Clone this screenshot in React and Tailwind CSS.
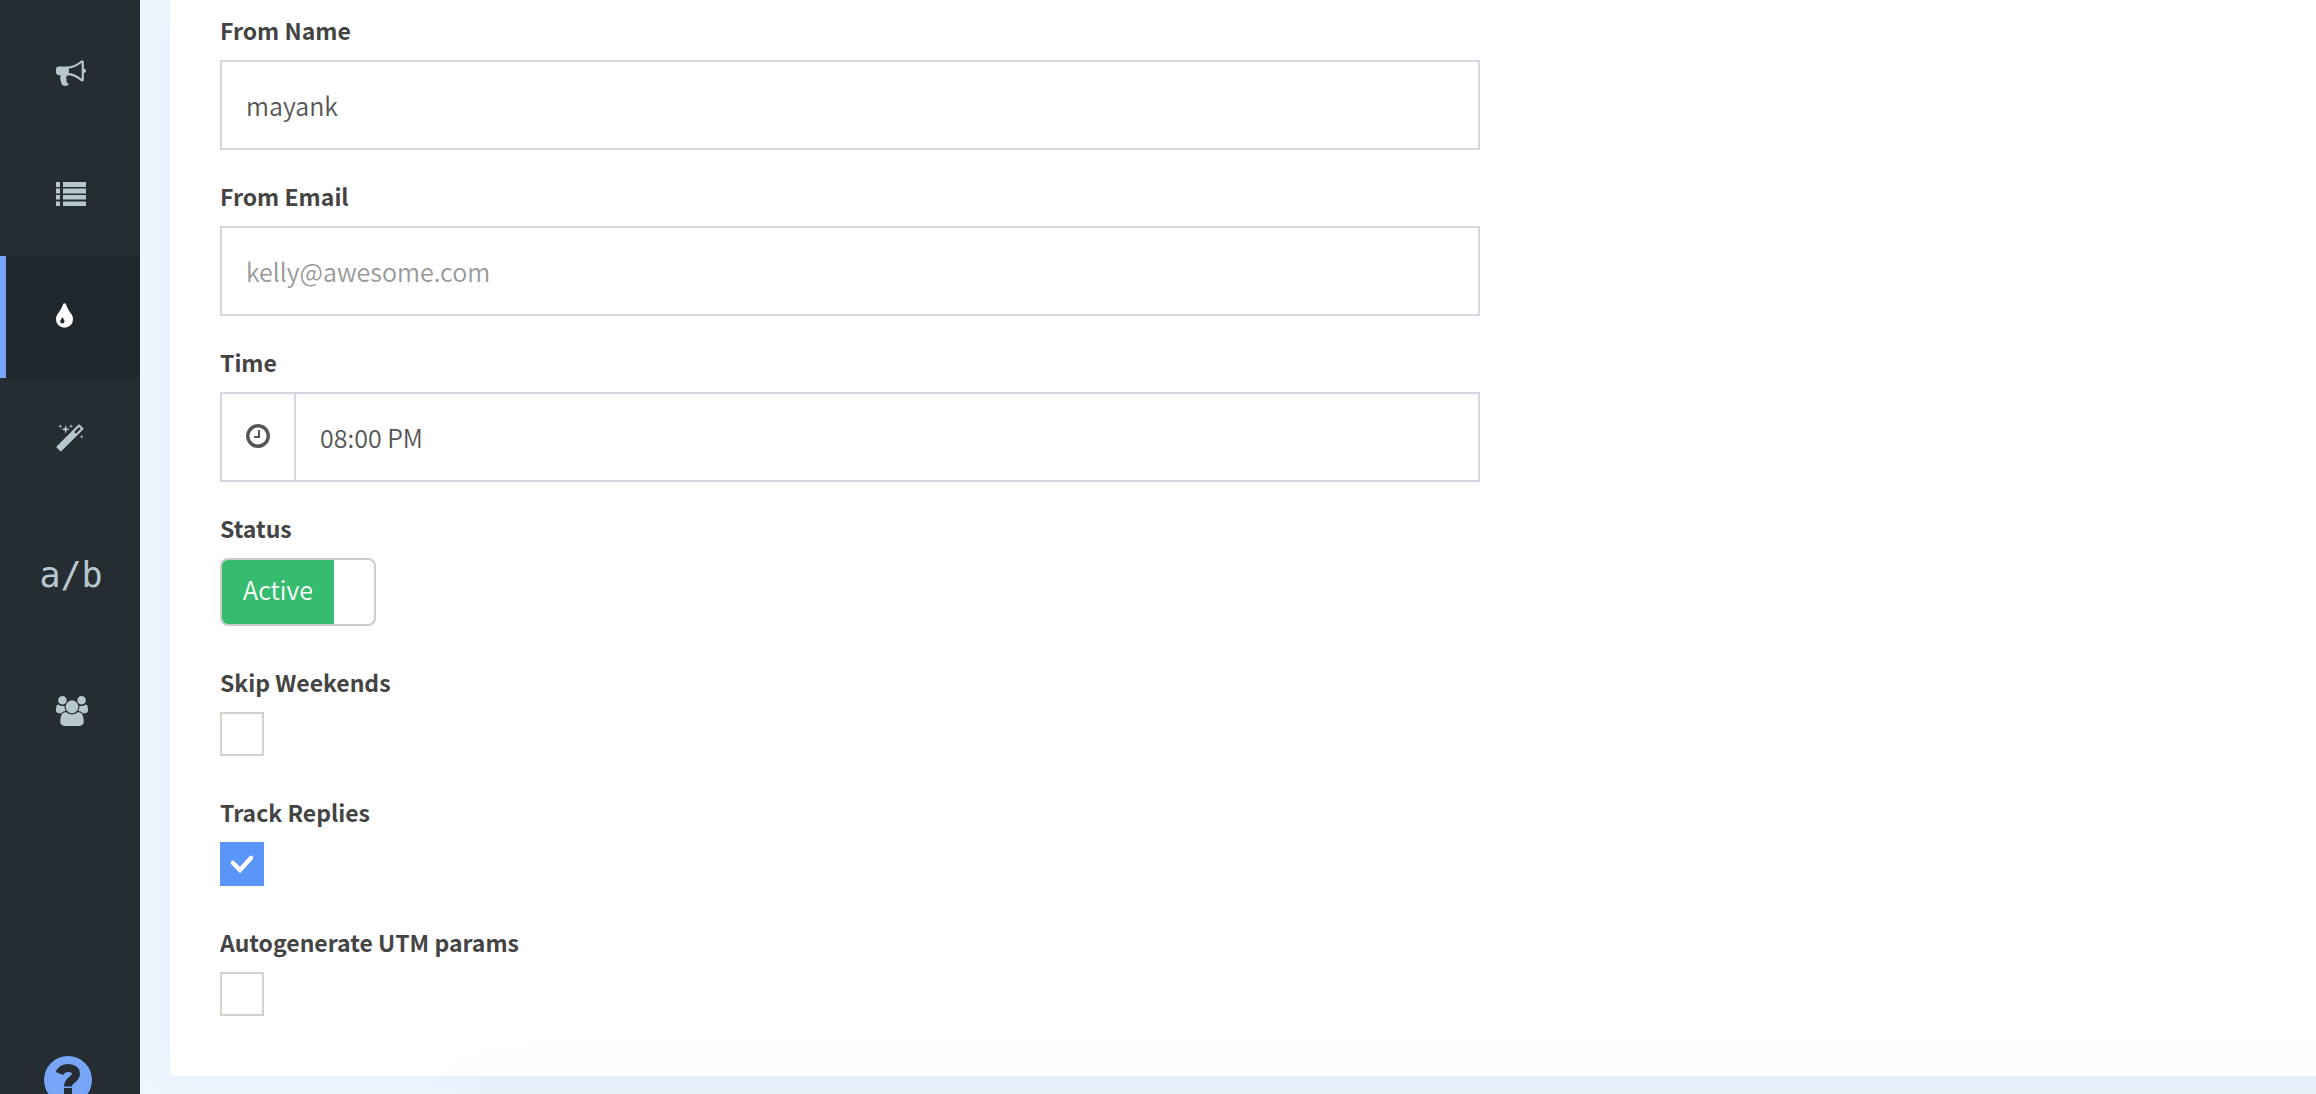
const navIcons = {
  campaigns: {
    box: '0 0 1792 1792',
    size: 'w-[30px] h-[30px]',
    d: 'M1664 640q53 0 90.5 37.5t37.5 90.5-37.5 90.5-90.5 37.5v384q0 52-38 90t-90 38q-417-347-812-380-58 19-91 66t-31 100.5 40 92.5q-20 33-23 65.5t6 58 33.5 55 48 50 61.5 50.5q-29 58-111.5 83t-168.5 11.5-132-55.5q-7-23-29.5-87.5t-32-94.5-23-89-15-101 3.5-98 22-110.5h-122q-66 0-113-47t-47-113v-192q0-66 47-113t113-47h480q435 0 896-384 52 0 90 38t38 90v384zm-128 604v-954q-394 302-768 343v270q377 42 768 341z',
  },
  lists: {
    box: '0 0 30 30',
    size: 'w-[30px] h-[30px]',
    d: 'M0 2h4v5H0zM7 2h23v5H7zM0 8.500h4v5H0zM7 8.500h23v5H7zM0 15h4v4.500H0zM7 15h23v4.500H7zM0 21.500h4v4.500H0zM7 21.500h23v4.500H7z',
  },
  drips: {
    box: '384 0 1024 1792',
    size: 'w-[17px] h-[30px]',
    d: 'M896 1152q0-36-20-69-1-1-15.5-22.5t-25.5-38-25-44-21-50.5q-4-16-21-16t-21 16q-7 23-21 50.5t-25 44-25.5 38-15.5 22.5q-20 33-20 69 0 53 37.5 90.5t90.5 37.5 90.5-37.5 37.5-90.5zm512-128q0 212-150 362t-362 150-362-150-150-362q0-145 81-275 6-9 62.5-90.5t101-151 99.5-178 83-201.5q9-30 34-47t51-17 51.5 17 33.5 47q28 93 83 201.5t99.5 178 101 151 62.5 90.5q81 127 81 275z',
  },
  magic: {
    box: '64 0 1792 1792',
    size: 'w-[30px] h-[30px]',
    d: 'M1254 581l293-293-107-107-293 293zm447-293q0 27-18 45l-1286 1286q-18 18-45 18t-45-18l-198-198q-18-18-18-45t18-45l1286-1286q18-18 45-18t45 18l198 198q18 18 18 45zm-1351-190l98 30-98 30-30 98-30-98-98-30 98-30 30-98zm350 162l196 60-196 60-60 196-60-196-196-60 196-60 60-196zm930 478l98 30-98 30-30 98-30-98-98-30 98-30 30-98zm-640-640l98 30-98 30-30 98-30-98-98-30 98-30 30-98z',
  },
  people: {
    box: '0 0 1920 1792',
    size: 'w-[32px] h-[30px]',
    d: 'M593 896q-162 5-265 128h-134q-82 0-138-40.5t-56-118.5q0-353 124-353 6 0 43.5 21t97.5 42.5 119 21.5q67 0 133-23-5 37-5 66 0 139 81 256zm1071 637q0 120-73 189.5t-194 69.5h-874q-121 0-194-69.5t-73-189.5q0-53 3.5-103.5t14-109 26.5-108.5 43-97.5 62-81 85.5-53.5 111.5-20q10 0 43 21.5t73 48 107 48 135 21.5 135-21.5 107-48 73-48 43-21.5q61 0 111.5 20t85.5 53.5 62 81 43 97.5 26.5 108.5 14 109 3.5 103.5zm-1024-1277q0 106-75 181t-181 75-181-75-75-181 75-181 181-75 181 75 75 181zm704 384q0 159-112.5 271.5t-271.5 112.5-271.5-112.5-112.5-271.5 112.5-271.5 271.5-112.5 271.5 112.5 112.5 271.5zm576 225q0 78-56 118.5t-138 40.5h-134q-103-123-265-128 81-117 81-256 0-29-5-66 66 23 133 23 59 0 119-21.5t97.5-42.5 43.5-21q124 0 124 353zm-128-609q0 106-75 181t-181 75-181-75-75-181 75-181 181-75 181 75 75 181z',
  },
};

const clockPath =
  'M1024 544v448q0 14-9 23t-23 9h-320q-14 0-23-9t-9-23v-64q0-14 9-23t23-9h224v-352q0-14 9-23t23-9h64q14 0 23 9t9 23zm416 352q0-148-73-273t-198-198-273-73-273 73-198 198-73 273 73 273 198 198 273 73 273-73 198-198 73-273zm224 0q0 209-103 385.5t-279.5 279.5-385.5 103-385.5-103-279.5-279.5-103-385.5 103-385.5 279.5-279.5 385.5-103 385.5 103 279.5 279.5 103 385.5z';

function NavItem({ icon, label, active }) {
  const { box, size, d } = navIcons[icon];
  return (
    <a
      href="#"
      aria-label={label}
      className={`flex h-[122px] items-center border-l-6 pl-[50px] ${
        active ? 'border-[#78a5f8] bg-[#20282d] text-white' : 'border-transparent text-[#b8c7ce]'
      }`}
    >
      <svg viewBox={box} className={`${size} fill-current`}>
        <path d={d} />
      </svg>
    </a>
  );
}

function Sidebar() {
  return (
    <nav className="flex w-[140px] shrink-0 flex-col bg-[#252d33] pt-3">
      <NavItem icon="campaigns" label="Campaigns" />
      <NavItem icon="lists" label="Lists" />
      <NavItem icon="drips" label="Drips" active />
      <NavItem icon="magic" label="Automations" />
      <a
        href="#"
        className="flex h-[150px] items-center justify-center pl-0.5 font-['DejaVu_Sans_Mono',monospace] text-[35px] text-[#b8c7ce]"
      >
        a/b
      </a>
      <NavItem icon="people" label="Subscribers" />
      <button type="button" aria-label="Help" className="mt-auto ml-11 h-[38px] w-12 overflow-hidden">
        <svg viewBox="0 0 48 48" className="h-12 w-12">
          <circle cx="24" cy="24" r="24" fill="#78a5f8" />
          <path
            d="M15.500 17.500C17 13.500 20.500 12 24.500 12c4.500 0 7.500 2.500 7.500 6 0 5.500-8 5.500-8 12.500"
            fill="none"
            stroke="#252d33"
            strokeWidth="8"
          />
          <path d="M20 32h8v8h-8z" fill="#252d33" />
        </svg>
      </button>
    </nav>
  );
}

function Field({ id, label, children }) {
  return (
    <div className="flex flex-col items-start gap-4">
      <label htmlFor={id} className="text-[23px] leading-[28px] font-bold text-[#444444]">
        {label}
      </label>
      {children}
    </div>
  );
}

function TextInput(props) {
  return (
    <input
      type="text"
      className="h-[90px] w-full border-2 border-[#d3d7e1] bg-white px-6 text-[25px] font-[350] text-[#555555] outline-none placeholder:text-[#999999]"
      {...props}
    />
  );
}

function CheckBox({ id, defaultChecked }) {
  return (
    <span className="grid h-11 w-11">
      <input
        id={id}
        type="checkbox"
        defaultChecked={defaultChecked}
        className="peer col-start-1 row-start-1 h-11 w-11 appearance-none border-2 border-[#d5d1ca] bg-white checked:border-[#5a95f9] checked:bg-[#5a95f9]"
      />
      <svg
        viewBox="0 0 44 44"
        className="pointer-events-none invisible col-start-1 row-start-1 h-11 w-11 peer-checked:visible"
      >
        <path d="M13 21l7 7 11-12" fill="none" stroke="white" strokeWidth="4.500" strokeLinecap="round" />
      </svg>
    </span>
  );
}

function StatusSwitch({ id }) {
  return (
    <button
      id={id}
      type="button"
      role="switch"
      aria-checked="true"
      className="flex h-[68px] w-[156px] overflow-hidden rounded-lg border-2 border-[#cccccc] bg-white text-[25px] font-[350] text-white"
    >
      <span className="flex h-full w-28 items-center justify-center bg-[#35bc6e] pb-1">Active</span>
    </button>
  );
}

export default function App() {
  return (
    <div className="flex min-h-screen bg-[#eff6ff] font-['Source_Sans_Pro','Noto_Sans_CJK_SC',sans-serif]">
      <Sidebar />
      <main className="relative min-w-0 flex-1 overflow-hidden pb-[18px] pl-[30px]">
        <form className="-mr-12 rounded-bl-md bg-white px-[50px] pt-4 pb-[60px] shadow-[0_0_40px_#e2edf8]">
          <div className="flex max-w-[1260px] flex-col gap-[42px]">
            <div className="flex flex-col gap-8">
              <Field id="from-name" label="From Name">
                <TextInput id="from-name" defaultValue="mayank" />
              </Field>
              <Field id="from-email" label="From Email">
                <TextInput id="from-email" placeholder="kelly@awesome.com" />
              </Field>
              <Field id="time" label="Time">
                <div className="flex w-full">
                  <span className="flex w-[74px] shrink-0 items-center justify-center border-2 border-r-0 border-[#d3d7e1] pb-0.5">
                    <svg viewBox="0 0 1792 1792" className="h-7 w-7 fill-[#555555]">
                      <path d={clockPath} />
                    </svg>
                  </span>
                  <TextInput id="time" defaultValue="08:00 PM" />
                </div>
              </Field>
              <Field id="status" label="Status">
                <StatusSwitch id="status" />
              </Field>
            </div>
            <Field id="skip-weekends" label="Skip Weekends">
              <CheckBox id="skip-weekends" />
            </Field>
            <Field id="track-replies" label="Track Replies">
              <CheckBox id="track-replies" defaultChecked />
            </Field>
            <Field id="utm-params" label="Autogenerate UTM params">
              <CheckBox id="utm-params" />
            </Field>
          </div>
        </form>
        {/* soft shade from the bar docked under the form */}
        <div className="pointer-events-none absolute top-full -right-20 left-[320px] h-20 shadow-[0_0_80px_rgba(0,0,0,0.04)]" />
      </main>
    </div>
  );
}
